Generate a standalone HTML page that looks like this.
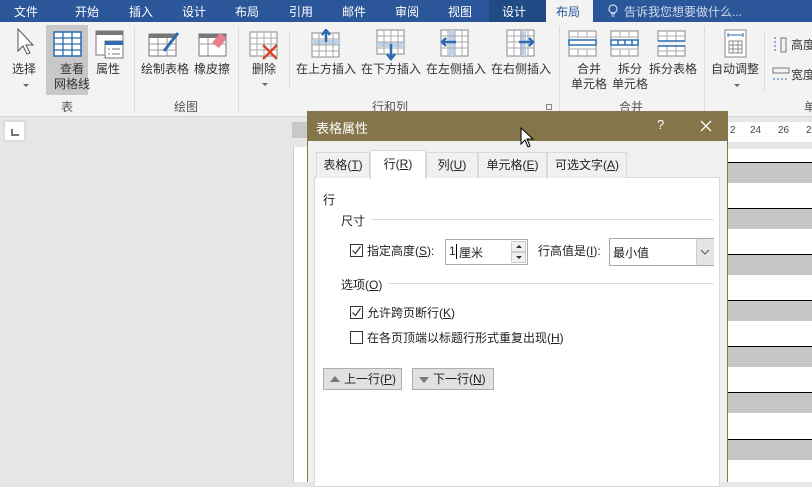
<!DOCTYPE html>
<html><head><meta charset="utf-8"><style>
*{margin:0;padding:0;box-sizing:border-box}
body{width:812px;height:482px;overflow:hidden;position:relative;background:#e6e6e6;font-family:"Liberation Sans","Noto Sans CJK SC",sans-serif;font-size:12px;color:#222}
.a{position:absolute;white-space:nowrap}
.tb{position:absolute;top:0;left:0;width:812px;height:22px;background:#2b579a;color:#fff;font-size:12px}
.tb span{position:absolute;top:3px}
.rib{position:absolute;top:22px;left:0;width:812px;height:95px;background:#f3f3f3;border-bottom:1px solid #d4d4d4}
.lbl{position:absolute;font-size:12px;color:#333;text-align:center;line-height:15px;white-space:nowrap}
.grp{position:absolute;top:76px;font-size:12px;color:#555}
.sep{position:absolute;top:4px;width:1px;height:86px;background:#dcdcdc}
.arr{position:absolute;width:0;height:0;border-left:3px solid transparent;border-right:3px solid transparent;border-top:3px solid #666}
.dlg{position:absolute;left:307px;top:111px;width:421px;height:371px;background:#f0f0f0;border-left:1px solid #84764a;border-right:1px solid #84764a}
.dt{position:absolute;left:0;top:0;width:100%;height:30px;background:#84764a;color:#fff;font-size:13px}
.tab{position:absolute;top:41px;height:26px;border:1px solid #d9d9d9;border-bottom:none;background:#f0f0f0;font-size:12px;text-align:center;line-height:25px}
.cb{position:absolute;width:13px;height:13px;border:1px solid #333;background:#fff}
.btn{position:absolute;height:22px;background:#e1e1e1;border:1px solid #adadad;font-size:12px;line-height:20px}
u{text-decoration:underline}
</style></head><body>
<div class="tb">
<span style="left:14px">文件</span><span style="left:75px">开始</span><span style="left:129px">插入</span><span style="left:182px">设计</span><span style="left:235px">布局</span><span style="left:289px">引用</span><span style="left:342px">邮件</span><span style="left:395px">审阅</span><span style="left:448px">视图</span>
<div style="position:absolute;left:489px;top:0;width:57px;height:22px;background:#1f4a84"></div><span style="left:502px">设计</span>
<div style="position:absolute;left:546px;top:0;width:47px;height:22px;background:#f3f3f3"></div><span style="left:556px;color:#2b579a">布局</span>
<svg class="a" style="left:608px;top:4px" width="10" height="14"><circle cx="5" cy="5" r="4" fill="none" stroke="#cfd9ea" stroke-width="1.2"/><path d="M3 10h4M3.5 12h3" stroke="#cfd9ea"/></svg>
<span style="left:624px;color:#cfd9ea">告诉我您想要做什么...</span>
</div>
<div class="rib">
<div class="a" style="left:46px;top:3px;width:42px;height:70px;background:#c8c8c8"></div>
<svg class="a" style="left:16px;top:6px" width="20" height="28"><path d="M2 1v22l5-5 4 8 3-1-4-8h7z" fill="#fff" stroke="#555"/></svg>
<svg class="a" style="left:53px;top:9px" width="30" height="28"><rect x="1" y="1" width="27" height="24" fill="#fff" stroke="#2b6cb0" stroke-width="1.5"/><path d="M1 7h27M1 13h27M1 19h27M10 1v24M19 1v24" stroke="#2b6cb0" stroke-width="1.3"/></svg>
<svg class="a" style="left:95px;top:8px" width="30" height="30"><rect x="1" y="1" width="27" height="24" fill="#fff" stroke="#777"/><rect x="1" y="1" width="27" height="4" fill="#777"/><rect x="10" y="11" width="18" height="17" fill="#fff" stroke="#777"/><rect x="10" y="11" width="18" height="4" fill="#2b6cb0"/><path d="M13 19h2M17 19h8M13 24h2M17 24h8" stroke="#777"/></svg>
<div class="lbl" style="left:12px;top:40px">选择</div><div class="arr" style="left:23px;top:62px"></div>
<div class="lbl" style="left:54px;top:40px">查看<br>网格线</div>
<div class="lbl" style="left:96px;top:40px">属性</div>
<div class="grp" style="left:61px">表</div>
<div class="sep" style="left:134px"></div>
<svg class="a" style="left:148px;top:7px" width="36" height="30"><rect x="1" y="5" width="27" height="22" fill="#fff" stroke="#777"/><rect x="1" y="5" width="27" height="4" fill="#777"/><path d="M1 15h27M1 21h27M10 9v18M19 9v18" stroke="#999"/><path d="M16 22l14-18" stroke="#2b6cb0" stroke-width="3"/></svg>
<svg class="a" style="left:198px;top:7px" width="32" height="30"><rect x="1" y="5" width="27" height="22" fill="#fff" stroke="#777"/><rect x="1" y="5" width="27" height="4" fill="#777"/><path d="M1 15h27M10 9v18" stroke="#999"/><path d="M14 14l8-10 7 5-8 10z" fill="#e87d8e"/></svg>
<div class="lbl" style="left:141px;top:40px">绘制表格</div><div class="lbl" style="left:194px;top:40px">橡皮擦</div>
<div class="grp" style="left:174px">绘图</div>
<div class="sep" style="left:238px"></div>
<svg class="a" style="left:249px;top:9px" width="32" height="32"><rect x="1" y="1" width="27" height="24" fill="#fff" stroke="#888"/><path d="M1 7h27M1 13h27M1 19h27M8 1v24M15 1v24M22 1v24" stroke="#aaa"/><path d="M14 14l14 14M28 14l-14 14" stroke="#d9442a" stroke-width="2.5"/></svg>
<div class="lbl" style="left:252px;top:40px">删除</div><div class="arr" style="left:262px;top:61px"></div>
<div class="a" style="left:289px;top:10px;width:1px;height:55px;background:#dcdcdc"></div>
<svg class="a" style="left:311px;top:7px" width="30" height="30"><rect x="1" y="4" width="27" height="24" fill="#fff" stroke="#888"/><rect x="1" y="11" width="27" height="5" fill="#bcd3ea"/><path d="M1 10h27M1 16h27M1 22h27M8 4v24M15 4v24M22 4v24" stroke="#aaa"/><path d="M15 13V2M11 6l4-5 4 5" stroke="#2b6cb0" stroke-width="2.5" fill="none"/></svg>
<svg class="a" style="left:376px;top:7px" width="30" height="32"><rect x="1" y="1" width="27" height="24" fill="#fff" stroke="#888"/><rect x="1" y="13" width="27" height="5" fill="#bcd3ea"/><path d="M1 7h27M1 13h27M1 19h27M8 1v24M15 1v24M22 1v24" stroke="#aaa"/><path d="M15 15v15M11 25l4 5 4-5" stroke="#2b6cb0" stroke-width="2.5" fill="none"/></svg>
<svg class="a" style="left:440px;top:7px" width="30" height="30"><rect x="1" y="1" width="27" height="26" fill="#fff" stroke="#888"/><rect x="9" y="1" width="6" height="26" fill="#bcd3ea"/><path d="M1 7h27M1 13h27M1 19h27M8 1v26M15 1v26M22 1v26" stroke="#aaa"/><path d="M16 13H2M6 9l-4 4 4 4" stroke="#2b6cb0" stroke-width="2.5" fill="none"/></svg>
<svg class="a" style="left:506px;top:7px" width="30" height="30"><rect x="1" y="1" width="27" height="26" fill="#fff" stroke="#888"/><rect x="14" y="1" width="6" height="26" fill="#bcd3ea"/><path d="M1 7h27M1 13h27M1 19h27M8 1v26M15 1v26M22 1v26" stroke="#aaa"/><path d="M13 13h14M23 9l4 4-4 4" stroke="#2b6cb0" stroke-width="2.5" fill="none"/></svg>
<div class="lbl" style="left:296px;top:40px">在上方插入</div><div class="lbl" style="left:361px;top:40px">在下方插入</div><div class="lbl" style="left:426px;top:40px">在左侧插入</div><div class="lbl" style="left:491px;top:40px">在右侧插入</div>
<div class="grp" style="left:372px">行和列</div>
<div class="a" style="left:546px;top:82px;width:6px;height:6px;border:1px solid #888"></div>
<div class="sep" style="left:559px"></div>
<svg class="a" style="left:568px;top:8px" width="30" height="28"><rect x="1" y="1" width="27" height="25" fill="#fff" stroke="#888"/><path d="M1 7h27M1 19h27M10 1v6M19 1v6M10 19v7M19 19v7" stroke="#aaa"/><rect x="1" y="10" width="27" height="5" fill="none" stroke="#2b6cb0" stroke-width="1.5"/></svg>
<svg class="a" style="left:610px;top:8px" width="30" height="28"><rect x="1" y="1" width="27" height="25" fill="#fff" stroke="#888"/><path d="M1 7h27M1 19h27M10 1v6M19 1v6M10 19v7M19 19v7" stroke="#aaa"/><rect x="1" y="10" width="27" height="5" fill="none" stroke="#2b6cb0" stroke-width="1.5"/><path d="M8 10v5M15 10v5M22 10v5" stroke="#2b6cb0" stroke-width="1.5"/></svg>
<svg class="a" style="left:657px;top:8px" width="30" height="28"><rect x="1" y="1" width="27" height="10" fill="#fff" stroke="#888"/><rect x="1" y="16" width="27" height="10" fill="#fff" stroke="#888"/><path d="M1 6h27M1 21h27M10 1v10M19 1v10M10 16v10M19 16v10" stroke="#aaa"/><path d="M1 11h27M1 16h27" stroke="#2b6cb0" stroke-width="1.5"/></svg>
<div class="lbl" style="left:571px;top:40px">合并<br>单元格</div><div class="lbl" style="left:612px;top:40px">拆分<br>单元格</div><div class="lbl" style="left:649px;top:40px">拆分表格</div>
<div class="grp" style="left:619px">合并</div>
<div class="sep" style="left:704px"></div>
<svg class="a" style="left:724px;top:7px" width="24" height="30"><rect x="1" y="1" width="21" height="27" fill="#fff" stroke="#888"/><path d="M4 6h15M4 4v4M19 4v4" stroke="#2b6cb0"/><rect x="5" y="12" width="13" height="12" fill="none" stroke="#888"/><path d="M5 16h13M5 20h13M9 12v12M14 12v12" stroke="#888"/></svg>
<div class="lbl" style="left:711px;top:40px">自动调整</div><div class="arr" style="left:734px;top:62px"></div>
<div class="a" style="left:764px;top:10px;width:1px;height:60px;background:#dcdcdc"></div>
<svg class="a" style="left:772px;top:14px" width="16" height="18"><path d="M3 1v16" stroke="#2b6cb0" stroke-dasharray="2 2"/><rect x="9" y="2" width="5" height="14" fill="none" stroke="#777"/></svg>
<div class="lbl" style="left:791px;top:16px">高度</div>
<svg class="a" style="left:772px;top:44px" width="18" height="18"><rect x="1" y="2" width="16" height="5" fill="none" stroke="#777"/><path d="M1 13h16" stroke="#2b6cb0" stroke-dasharray="2 2"/></svg>
<div class="lbl" style="left:791px;top:46px">宽度</div>
<div class="grp" style="left:804px">单</div>
</div>
<!-- document -->
<div class="a" style="left:3px;top:120px;width:23px;height:22px;background:#dcdcdc"></div>
<div class="a" style="left:4px;top:121px;width:21px;height:20px;background:#fff;border:1px solid #ddd"></div>
<div class="a" style="left:11px;top:129px;width:2px;height:7px;background:#777"></div><div class="a" style="left:11px;top:134px;width:8px;height:2px;background:#777"></div>
<div class="a" style="left:292px;top:122px;width:16px;height:16px;background:#c8c8c8"></div>
<div class="a" style="left:293px;top:147px;width:15px;height:335px;background:#fff;border-left:1px solid #ccc"></div>
<div class="a" style="left:728px;top:117px;width:84px;height:5px;background:#e6e6e6"></div>
<div class="a" style="left:728px;top:122px;width:84px;height:20px;background:#fff;font-size:10px;color:#444"><span class="a" style="left:2px;top:3px">2</span><span class="a" style="left:22px;top:3px">24</span><span class="a" style="left:50px;top:3px">26</span><span class="a" style="left:78px;top:3px">2</span></div>
<div class="a" style="left:728px;top:142px;width:84px;height:7px;background:#e6e6e6"></div>
<div class="a" style="left:728px;top:149px;width:84px;height:333px;background:#fff"></div>
<div class="a" style="left:728px;top:162px;width:84px;height:21px;background:#c6c6c6;border-top:1px solid #000"></div>
<div class="a" style="left:728px;top:208px;width:84px;height:21px;background:#c6c6c6;border-top:1px solid #000"></div>
<div class="a" style="left:728px;top:254px;width:84px;height:21px;background:#c6c6c6;border-top:1px solid #000"></div>
<div class="a" style="left:728px;top:300px;width:84px;height:21px;background:#c6c6c6;border-top:1px solid #000"></div>
<div class="a" style="left:728px;top:346px;width:84px;height:21px;background:#c6c6c6;border-top:1px solid #000"></div>
<div class="a" style="left:728px;top:392px;width:84px;height:21px;background:#c6c6c6;border-top:1px solid #000"></div>
<div class="a" style="left:728px;top:439px;width:84px;height:21px;background:#c6c6c6;border-top:1px solid #000"></div>
<!-- dialog -->
<div class="dlg">
<div class="dt"><span class="a" style="left:8px;top:7px">表格属性</span><span class="a" style="left:349px;top:6px">?</span>
<svg class="a" style="left:392px;top:9px" width="12" height="12"><path d="M1 1l10 10M11 1L1 11" stroke="#fff" stroke-width="1.3"/></svg></div>
<div class="a" style="left:6px;top:66px;width:406px;height:310px;background:#fff;border:1px solid #d9d9d9"></div>
<div class="tab" style="left:8px;width:54px">表格(<u>T</u>)</div>
<div class="tab" style="left:62px;width:56px;top:39px;height:29px;background:#fff;line-height:27px">行(<u>R</u>)</div>
<div class="tab" style="left:118px;width:52px">列(<u>U</u>)</div>
<div class="tab" style="left:170px;width:69px">单元格(<u>E</u>)</div>
<div class="tab" style="left:239px;width:80px">可选文字(<u>A</u>)</div>
<span class="a" style="left:15px;top:80px">行</span>
<span class="a" style="left:33px;top:101px">尺寸</span><div class="a" style="left:63px;top:108px;width:343px;height:1px;background:#dcdcdc"></div>
<div class="cb" style="left:42px;top:133px"><svg width="11" height="11" style="position:absolute;left:0;top:0"><path d="M1.5 5.5l3 3 5-7" stroke="#333" fill="none" stroke-width="1.2"/></svg></div>
<span class="a" style="left:59px;top:131px">指定高度(<u>S</u>):</span>
<div class="a" style="left:137px;top:128px;width:83px;height:26px;border:1px solid #aaa;background:#fff"><span class="a" style="left:3px;top:4px">1</span><div class="a" style="left:10px;top:4px;width:1px;height:15px;background:#000"></div><span class="a" style="left:13px;top:4px">厘米</span>
<div class="a" style="left:65px;top:1px;width:15px;height:11px;background:#f0f0f0;border:1px solid #ccc"></div><div class="a" style="left:65px;top:12px;width:15px;height:11px;background:#f0f0f0;border:1px solid #ccc"></div>
<div class="a" style="left:70px;top:5px;border-left:3px solid transparent;border-right:3px solid transparent;border-bottom:3px solid #333"></div><div class="a" style="left:70px;top:16px;border-left:3px solid transparent;border-right:3px solid transparent;border-top:3px solid #333"></div></div>
<span class="a" style="left:230px;top:131px">行高值是(<u>I</u>):</span>
<div class="a" style="left:301px;top:127px;width:105px;height:28px;border:1px solid #aaa;background:#fff"><span class="a" style="left:3px;top:5px">最小值</span><div class="a" style="left:86px;top:0;width:18px;height:26px;background:#e5e5e5;border-left:1px solid #ccc"></div>
<svg class="a" style="left:90px;top:10px" width="10" height="6"><path d="M1 1l4 4 4-4" stroke="#555" fill="none"/></svg></div>
<span class="a" style="left:33px;top:165px">选项(<u>O</u>)</span><div class="a" style="left:80px;top:172px;width:326px;height:1px;background:#dcdcdc"></div>
<div class="cb" style="left:42px;top:195px"><svg width="11" height="11" style="position:absolute;left:0;top:0"><path d="M1.5 5.5l3 3 5-7" stroke="#333" fill="none" stroke-width="1.2"/></svg></div>
<span class="a" style="left:59px;top:193px">允许跨页断行(<u>K</u>)</span>
<div class="cb" style="left:42px;top:220px"></div>
<span class="a" style="left:59px;top:218px">在各页顶端以标题行形式重复出现(<u>H</u>)</span>
<div class="btn" style="left:15px;top:257px;width:79px"><span class="a" style="left:6px;top:7px;border-left:5px solid transparent;border-right:5px solid transparent;border-bottom:6px solid #777"></span><span class="a" style="left:20px;top:0">上一行(<u>P</u>)</span></div>
<div class="btn" style="left:104px;top:257px;width:82px"><span class="a" style="left:6px;top:8px;border-left:5px solid transparent;border-right:5px solid transparent;border-top:6px solid #777"></span><span class="a" style="left:20px;top:0">下一行(<u>N</u>)</span></div>
</div>
<svg class="a" style="left:520px;top:127px" width="14" height="22"><path d="M1 1v16l4-4 3 7 2-1-3-7h6z" fill="#fff" stroke="#000"/></svg>
</body></html>
